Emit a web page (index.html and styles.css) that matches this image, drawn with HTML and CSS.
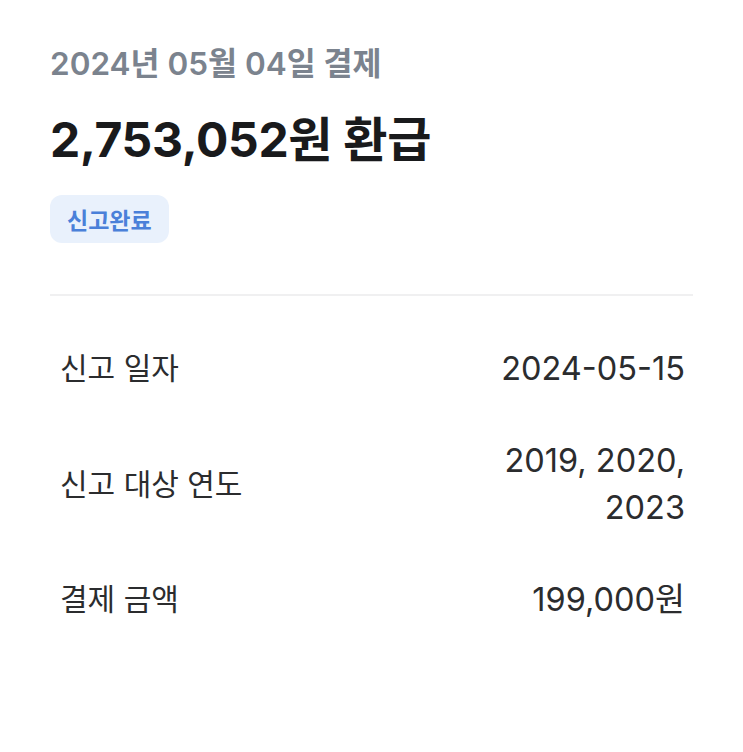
FILE: index.html
```html
<!DOCTYPE html>
<html lang="ko">
<head>
<meta charset="utf-8">
<link rel="stylesheet" href="styles.css">
</head>
<body>
<main class="page">
  <section class="summary">
    <p class="date">2024년 05월 04일 결제</p>
    <h1 class="amount">2,753,052원 환급</h1>
    <span class="badge">신고완료</span>
  </section>
  <hr class="divider">
  <dl class="details">
    <div class="row">
      <dt>신고 일자</dt>
      <dd>2024-05-15</dd>
    </div>
    <div class="row">
      <dt>신고 대상 연도</dt>
      <dd>2019, 2020, 2023</dd>
    </div>
    <div class="row">
      <dt>결제 금액</dt>
      <dd>199,000원</dd>
    </div>
  </dl>
</main>
</body>
</html>
```
FILE: styles.css
```css
* { box-sizing: border-box; }
html, body { margin: 0; padding: 0; background: #fff; }
body {
  font-family: "Inter", "Noto Sans CJK KR", sans-serif;
  width: 743px;
  height: 752px;
  overflow: hidden;
}
.page {
  padding: 44px 50px 0 50px;
}
.summary {
  display: flex;
  flex-direction: column;
  align-items: flex-start;
}
.date {
  margin: 0;
  font-size: 31.5px;
  line-height: 40px;
  font-weight: 600;
  color: #7b838e;
}
.amount {
  margin: 27px 0 0 0;
  font-size: 48px;
  line-height: 58px;
  font-weight: 700;
  color: #191a1c;
  letter-spacing: -0.3px;
}
.badge {
  margin-top: 26px;
  height: 48px;
  padding: 0 17px;
  display: inline-flex;
  align-items: center;
  border-radius: 12px;
  background: #e9f1fc;
  color: #4a80d9;
  font-size: 23px;
  font-weight: 600;
}
.divider {
  margin: 51px 0 0 0;
  border: 0;
  height: 2px;
  background: #f0f0f1;
}
.details {
  margin: 49px 0 0 0;
  padding: 0 8px 0 10px;
  display: flex;
  flex-direction: column;
  gap: 45px;
}
.row {
  display: flex;
  justify-content: space-between;
  align-items: center;
}
.row dt, .row dd {
  margin: 0;
  line-height: 47px;
  color: #2b2c2e;
  font-weight: 400;
}
.row dt {
  font-size: 30px;
}
.row dd {
  font-size: 32.5px;
  text-align: right;
  max-width: 205px;
}
```
